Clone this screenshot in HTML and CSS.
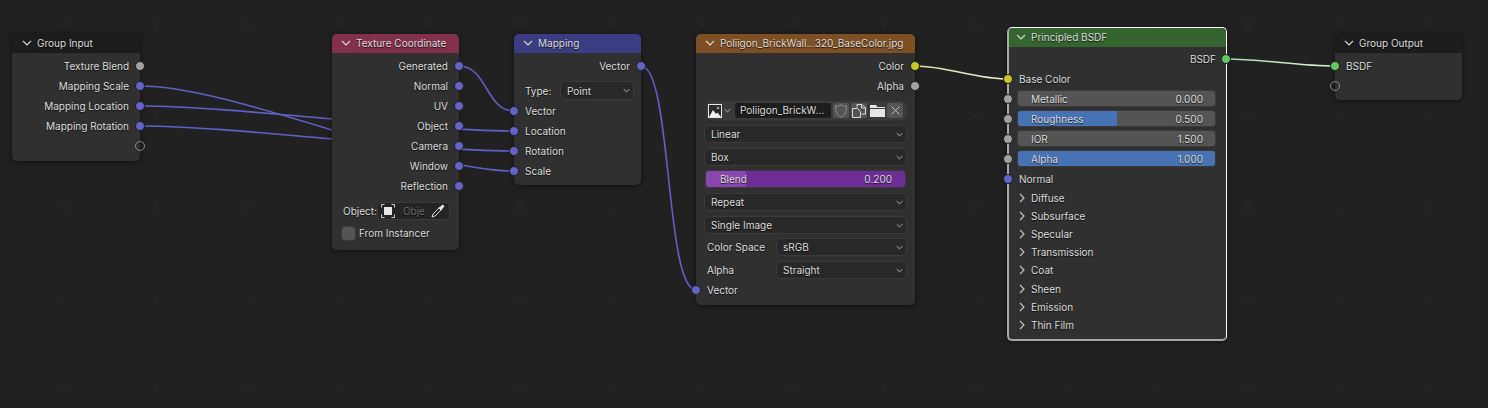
FILE: index.html
```html
<!DOCTYPE html>
<html lang="en">
<head>
  <meta charset="UTF-8">
  <title>Shader Editor</title>
  <link rel="stylesheet" href="styles.css">
</head>
<body>
  <svg class="sprite" width="0" height="0">
    <symbol id="down" viewBox="0 0 10 6"><path d="M1 1l4 4 4-4" fill="none" stroke="currentColor" stroke-width="1.1"/></symbol>
    <symbol id="right" viewBox="0 0 6 10"><path d="M1 1l4 4-4 4" fill="none" stroke="currentColor" stroke-width="1.1"/></symbol>
  </svg>

  <div class="canvas">
    <!-- links sit under the nodes -->
    <svg class="links" width="1488" height="408">
      <defs>
        <linearGradient id="colorLink" gradientUnits="userSpaceOnUse" x1="915" y1="0" x2="1007" y2="0">
          <stop offset="0" stop-color="#e0e0a0"/>
          <stop offset="1" stop-color="#f2f2d8"/>
        </linearGradient>
        <linearGradient id="bsdfLink" gradientUnits="userSpaceOnUse" x1="1226" y1="0" x2="1335" y2="0">
          <stop offset="0" stop-color="#a5dca5"/>
          <stop offset="1" stop-color="#e4f2e0"/>
        </linearGradient>
      </defs>
      <path class="link" d="M140 86C234 86 420 171 514 171"/>
      <path class="link" d="M140 106C234 106 420 131 514 131"/>
      <path class="link" d="M140 126C234 126 420 151 514 151"/>
      <path class="link" d="M459 66C487 66 486 111 514 111"/>
      <path class="link" d="M641 66C672 66 665 290 696 290"/>
      <path class="link link-color" d="M915 66C946 66 976 79 1007 79"/>
      <path class="link link-bsdf" d="M1226 59C1262 59 1299 66 1335 66"/>
    </svg>

    <section class="node group-input">
      <header class="node-head head-group"><svg class="chev"><use href="#down"/></svg>Group Input</header>
      <div class="node-body">
        <div class="row out">Texture Blend<i class="socket grey"></i></div>
        <div class="row out">Mapping Scale<i class="socket blue"></i></div>
        <div class="row out">Mapping Location<i class="socket blue"></i></div>
        <div class="row out">Mapping Rotation<i class="socket blue"></i></div>
        <div class="row out"><i class="socket empty"></i></div>
      </div>
    </section>

    <section class="node tex-coord">
      <header class="node-head head-input"><svg class="chev"><use href="#down"/></svg>Texture Coordinate</header>
      <div class="node-body">
        <div class="row out">Generated<i class="socket blue"></i></div>
        <div class="row out">Normal<i class="socket blue"></i></div>
        <div class="row out">UV<i class="socket blue"></i></div>
        <div class="row out">Object<i class="socket blue"></i></div>
        <div class="row out">Camera<i class="socket blue"></i></div>
        <div class="row out">Window<i class="socket blue"></i></div>
        <div class="row out">Reflection<i class="socket blue"></i></div>
        <div class="object-row">
          <span>Object:</span>
          <div class="object-field">
            <svg width="14" height="14" viewBox="0 0 14 14">
              <rect x="3" y="3" width="8" height="8" fill="#e6e6e6"/>
              <path d="M.5 3.500v-3h3M10.500.5h3v3M13.500 10.500v3h-3M3.500 13.500h-3v-3" fill="none" stroke="#cfcfcf"/>
            </svg>
            <span class="placeholder">Obje</span>
            <svg class="dropper" width="14" height="14" viewBox="0 0 14 14">
              <path d="M1 13l1-3 6-6 2 2-6 6z" fill="none" stroke="#d8d8d8"/>
              <path d="M7.500 3.500l2-1 1.500-1.500c1-1 3 1 2 2l-1.500 1.500-1 2z" fill="#e6e6e6"/>
            </svg>
          </div>
        </div>
        <div class="check-row"><i class="checkbox"></i>From Instancer</div>
      </div>
    </section>

    <section class="node mapping">
      <header class="node-head head-vector"><svg class="chev"><use href="#down"/></svg>Mapping</header>
      <div class="node-body">
        <div class="row out">Vector<i class="socket blue"></i></div>
        <div class="type-row">
          <span>Type:</span>
          <div class="select">Point<svg class="select-chev"><use href="#down"/></svg></div>
        </div>
        <div class="row in">Vector<i class="socket blue"></i></div>
        <div class="row in">Location<i class="socket blue"></i></div>
        <div class="row in">Rotation<i class="socket blue"></i></div>
        <div class="row in">Scale<i class="socket blue"></i></div>
      </div>
    </section>

    <section class="node image-tex">
      <header class="node-head head-texture"><svg class="chev"><use href="#down"/></svg>Poliigon_BrickWall...320_BaseColor.jpg</header>
      <div class="node-body">
        <div class="row out">Color<i class="socket yellow"></i></div>
        <div class="row out">Alpha<i class="socket grey"></i></div>
        <div class="image-bar">
          <div class="image-pick">
            <svg width="14" height="14" viewBox="0 0 14 14">
              <rect x=".5" y=".5" width="13" height="13" fill="#2a2a2a" stroke="#e6e6e6"/>
              <path d="M1 13l4-7 3 4 1.500-1.500 3.500 4.500z" fill="#f0f0f0"/>
              <circle cx="10" cy="4" r="1.300" fill="#9a9a9a"/>
            </svg>
            <svg class="pick-chev"><use href="#down"/></svg>
          </div>
          <div class="image-name">Poliigon_BrickW...</div>
          <div class="image-btn">
            <svg width="12" height="14" viewBox="0 0 12 14"><path d="M6 .8c1.500 1 3.500 1.400 5.500 1.400 0 5-1.500 9-5.500 11-4-2-5.500-6-5.500-11 2 0 4-.4 5.500-1.400z" fill="none" stroke="#8f8f8f"/></svg>
          </div>
          <div class="image-btn">
            <svg width="14" height="14" viewBox="0 0 14 14"><path d="M5 3.500v-3h5l3.500 3.500v6h-4M9.500.5v3.500h4" fill="none" stroke="#dcdcdc"/><path d="M.5 4.500h5l3 3v6h-8z" fill="none" stroke="#dcdcdc"/></svg>
          </div>
          <div class="image-btn folder">
            <svg width="15" height="13" viewBox="0 0 15 13"><path d="M0 1h6l1.500 2h7.500v1h-15z" fill="#e6e6e6"/><path d="M0 5h15v8h-15z" fill="#e6e6e6"/></svg>
          </div>
          <div class="image-btn">
            <svg width="11" height="11" viewBox="0 0 11 11"><path d="M1.500 1.500l8 8M9.500 1.500l-8 8" stroke="#cfcfcf" stroke-width=".9"/></svg>
          </div>
        </div>
        <div class="select wide">Linear<svg class="select-chev"><use href="#down"/></svg></div>
        <div class="select wide">Box<svg class="select-chev"><use href="#down"/></svg></div>
        <div class="slider wide purple"><i class="slider-fill" style="width:20%"></i><span>Blend</span><span>0.200</span></div>
        <div class="select wide">Repeat<svg class="select-chev"><use href="#down"/></svg></div>
        <div class="select wide">Single Image<svg class="select-chev"><use href="#down"/></svg></div>
        <div class="prop-row">
          <span>Color Space</span>
          <div class="select">sRGB<svg class="select-chev"><use href="#down"/></svg></div>
        </div>
        <div class="prop-row">
          <span>Alpha</span>
          <div class="select">Straight<svg class="select-chev"><use href="#down"/></svg></div>
        </div>
        <div class="row in">Vector<i class="socket blue"></i></div>
      </div>
    </section>

    <section class="node principled">
      <header class="node-head head-shader"><svg class="chev"><use href="#down"/></svg>Principled BSDF</header>
      <div class="node-body">
        <div class="row out">BSDF<i class="socket green"></i></div>
        <div class="row in">Base Color<i class="socket yellow"></i></div>
        <div class="row in"><i class="socket grey"></i><div class="slider"><span>Metallic</span><span>0.000</span></div></div>
        <div class="row in"><i class="socket grey"></i><div class="slider"><i class="slider-fill" style="width:50%"></i><span>Roughness</span><span>0.500</span></div></div>
        <div class="row in"><i class="socket grey"></i><div class="slider"><span>IOR</span><span>1.500</span></div></div>
        <div class="row in"><i class="socket grey"></i><div class="slider"><i class="slider-fill" style="width:100%"></i><span>Alpha</span><span>1.000</span></div></div>
        <div class="row in">Normal<i class="socket blue"></i></div>
        <ul class="panels">
          <li><svg class="panel-chev"><use href="#right"/></svg>Diffuse</li>
          <li><svg class="panel-chev"><use href="#right"/></svg>Subsurface</li>
          <li><svg class="panel-chev"><use href="#right"/></svg>Specular</li>
          <li><svg class="panel-chev"><use href="#right"/></svg>Transmission</li>
          <li><svg class="panel-chev"><use href="#right"/></svg>Coat</li>
          <li><svg class="panel-chev"><use href="#right"/></svg>Sheen</li>
          <li><svg class="panel-chev"><use href="#right"/></svg>Emission</li>
          <li><svg class="panel-chev"><use href="#right"/></svg>Thin Film</li>
        </ul>
      </div>
    </section>

    <section class="node group-output">
      <header class="node-head head-group"><svg class="chev"><use href="#down"/></svg>Group Output</header>
      <div class="node-body">
        <div class="row in">BSDF<i class="socket green"></i></div>
        <div class="row in"><i class="socket empty"></i></div>
      </div>
    </section>
  </div>
</body>
</html>
```

FILE: styles.css
```css
* {
  box-sizing: border-box;
}
html, body {
  margin: 0;
  height: 100%;
  overflow: hidden;
}
body {
  background-color: #212121;
  color: #dedede;
  font-family: Inter, "Liberation Sans", sans-serif;
  font-size: 10px;
  line-height: 14px;
}
.sprite {
  position: absolute;
}
.canvas {
  position: relative;
  width: 1488px;
  height: 408px;
  background-image: radial-gradient(circle, #282828 1.4px, transparent 2px);
  background-size: 91px 91px;
  background-position: 19.5px -20.5px;
}

/* links */
.links {
  position: absolute;
  left: 0;
  top: 0;
}
.link {
  fill: none;
  stroke: #6060c8;
  stroke-width: 1.6;
}
.link-color {
  stroke: url(#colorLink);
}
.link-bsdf {
  stroke: url(#bsdfLink);
}

/* nodes, placed on the free canvas */
.node {
  position: absolute;
  background-color: #303030;
  border-radius: 5px;
  box-shadow: 0 1px 6px rgba(0, 0, 0, 0.55);
  text-shadow: 0 1px 1px rgba(0, 0, 0, 0.8);
}
.group-input {
  left: 12px;
  top: 34px;
  width: 128px;
  height: 127px;
}
.group-input .node-head {
  padding-left: 10px;
}
.tex-coord {
  left: 332px;
  top: 34px;
  width: 127px;
  height: 216px;
}
.mapping {
  left: 514px;
  top: 34px;
  width: 127px;
  height: 151px;
}
.image-tex {
  left: 696px;
  top: 34px;
  width: 219px;
  height: 271px;
}
.principled {
  left: 1008px;
  top: 28px;
  width: 218px;
  height: 312px;
}
.principled::before {
  content: "";
  position: absolute;
  left: -1px;
  right: -1px;
  top: -1px;
  bottom: -1px;
  border: 1px solid #fff;
  border-left: 2px solid #a8a8a8;
  border-bottom: 2px solid #a8a8a8;
  border-radius: 5px;
}
.principled .node-body {
  padding-top: 2px;
}
.principled .node-head {
  padding-left: 8px;
}
.principled .row {
  padding: 0 10px 0 11px;
}
.principled .row .slider {
  margin: 0 1px 1px -1px;
}
.group-output {
  left: 1335px;
  top: 34px;
  width: 127px;
  height: 66px;
}
.node-head {
  display: flex;
  align-items: center;
  height: 19px;
  padding: 0 0 2px 9px;
  border-radius: 5px 5px 0 0;
  white-space: nowrap;
  overflow: hidden;
}
.head-group {
  background-color: #1c1c1c;
}
.head-input {
  background-color: #83314a;
}
.head-vector {
  background-color: #3c3c83;
}
.head-texture {
  background-color: #7f4f24;
}
.head-shader {
  background-color: #35652f;
}
.chev {
  flex: none;
  width: 10px;
  height: 6px;
  margin-right: 5px;
  color: #d8d8d8;
}
.node-body {
  padding-top: 3px;
}

/* socket rows */
.row {
  position: relative;
  display: flex;
  align-items: center;
  height: 20px;
  padding: 0 11px 1px;
}
.row.out {
  justify-content: flex-end;
}
.socket {
  position: absolute;
  top: 5px;
  width: 10px;
  height: 10px;
  border-radius: 50%;
  border: 1px solid #1f1f1f;
}
.row.out .socket {
  right: -5px;
}
.row.in .socket {
  left: -5px;
}
.grey {
  background-color: #a1a1a1;
}
.blue {
  background-color: #6363c7;
}
.yellow {
  background-color: #c7c729;
}
.green {
  background-color: #63c763;
}
.socket.empty {
  border: 1px solid #8a8a8a;
  background-color: transparent;
}

/* widgets */
.select {
  position: relative;
  display: flex;
  align-items: center;
  height: 16px;
  padding-left: 6px;
  background-color: #282828;
  border-radius: 4px;
  box-shadow: 0 0 0 1px #3a3a3a;
}
.select-chev {
  position: absolute;
  right: 3px;
  top: 6px;
  width: 7px;
  height: 5px;
  color: #d8d8d8;
}
.wide {
  margin: 0 9px 6.7px;
}
.slider {
  position: relative;
  display: flex;
  flex: 1;
  justify-content: space-between;
  align-items: center;
  height: 15px;
  padding: 0 12px 0 13px;
  overflow: hidden;
  background-color: #545454;
  border-radius: 3px;
  box-shadow: 0 0 0 1px #3a3a3a;
}
.slider span {
  position: relative;
}
.slider-fill {
  position: absolute;
  left: 0;
  top: 0;
  bottom: 0;
  background-color: #4772b3;
}
.slider.purple {
  flex: none;
  height: 16px;
  margin: 0 10px 6.7px;
  padding: 0 13px 0 14px;
  background-color: #6e2d96;
}
.purple .slider-fill {
  background-color: #8a45ae;
}
.type-row {
  display: flex;
  align-items: center;
  justify-content: space-between;
  height: 25px;
  padding: 4px 8px 0 11px;
}
.type-row .select {
  width: 72px;
  height: 17px;
}
.object-row {
  display: flex;
  align-items: center;
  gap: 1px;
  height: 16px;
  margin: 7px 10px 0 11px;
}
.object-field {
  display: flex;
  flex: 1;
  align-items: center;
  height: 16px;
  padding: 0 4px 0 3px;
  background-color: #242424;
  border-radius: 4px;
  box-shadow: 0 0 0 1px #3a3a3a;
}
.placeholder {
  flex: 1;
  padding-left: 8px;
  color: #6a6a6a;
}
.check-row {
  display: flex;
  align-items: center;
  gap: 4px;
  height: 14px;
  margin: 7px 0 0 10px;
}
.checkbox {
  width: 13px;
  height: 13px;
  background-color: #545454;
  border-radius: 3px;
  box-shadow: 0 0 0 1px #3a3a3a;
}

/* image row */
.image-bar {
  display: flex;
  align-items: center;
  height: 15px;
  margin: 7px 10px 8px 12px;
  gap: 2px;
  box-shadow: 0 0 0 2px #3a3a3a;
  background-color: #3a3a3a;
  border-radius: 3px;
}
.image-pick {
  display: flex;
  flex: none;
  align-items: center;
  width: 25px;
}
.pick-chev {
  width: 7px;
  height: 5px;
  margin-left: 2px;
  color: #d8d8d8;
}
.image-name {
  flex: none;
  width: 96px;
  height: 15px;
  padding-left: 5px;
  background-color: #1d1d1d;
  border-radius: 2px;
  overflow: hidden;
}
.image-btn {
  display: flex;
  flex: none;
  align-items: center;
  justify-content: center;
  width: 16px;
  height: 15px;
  background-color: #545454;
  border-radius: 2px;
}
.image-btn.folder {
  background-color: transparent;
}
.prop-row {
  display: flex;
  align-items: center;
  justify-content: space-between;
  height: 16px;
  margin: 0 9px 6.7px 11px;
}
.prop-row + .row {
  margin-top: -4.7px;
}
.prop-row .select {
  width: 129px;
}

/* collapsed panels */
.panels {
  margin: -0.5px 0 0;
  padding: 0;
  list-style: none;
}
.panels li {
  display: flex;
  align-items: center;
  height: 18.2px;
  padding-left: 11px;
}
.panel-chev {
  width: 6px;
  height: 10px;
  margin-right: 6px;
  color: #c8c8c8;
}
```
